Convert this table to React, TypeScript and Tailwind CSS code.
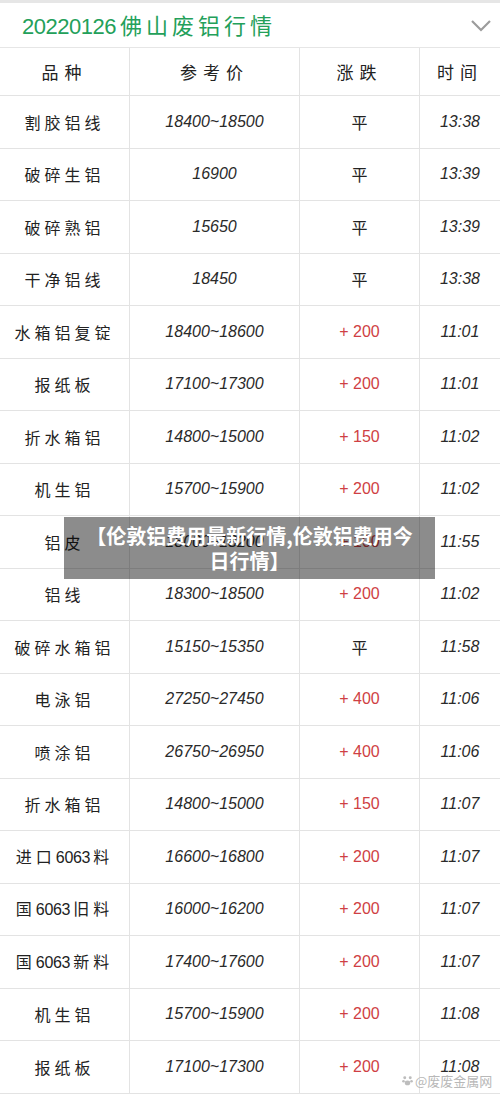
const ROWS: [string, string, string, string][] = [
  ["割胶铝线", "18400~18500", "平", "13:38"],
  ["破碎生铝", "16900", "平", "13:39"],
  ["破碎熟铝", "15650", "平", "13:39"],
  ["干净铝线", "18450", "平", "13:38"],
  ["水箱铝复锭", "18400~18600", "+ 200", "11:01"],
  ["报纸板", "17100~17300", "+ 200", "11:01"],
  ["折水箱铝", "14800~15000", "+ 150", "11:02"],
  ["机生铝", "15700~15900", "+ 200", "11:02"],
  ["铝皮", "18000~18200", "+ 100", "11:55"],
  ["铝线", "18300~18500", "+ 200", "11:02"],
  ["破碎水箱铝", "15150~15350", "平", "11:58"],
  ["电泳铝", "27250~27450", "+ 400", "11:06"],
  ["喷涂铝", "26750~26950", "+ 400", "11:06"],
  ["折水箱铝", "14800~15000", "+ 150", "11:07"],
  ["进口6063料", "16600~16800", "+ 200", "11:07"],
  ["国6063旧料", "16000~16200", "+ 200", "11:07"],
  ["国6063新料", "17400~17600", "+ 200", "11:07"],
  ["机生铝", "15700~15900", "+ 200", "11:08"],
  ["报纸板", "17100~17300", "+ 200", "11:08"],
];

const cjk = "font-['Noto_Sans_CJK_SC',sans-serif]";
const num = "font-['Liberation_Sans',sans-serif] italic";

// digits inside a product name keep tight spacing, CJK gets spread out
function Name({ text }: { text: string }) {
  const parts = text.split(/(\d+)/).filter(Boolean);
  return (
    <span className={`${cjk} text-[16px]`}>
      {parts.map((p, i) =>
        /\d/.test(p) ? (
          <span key={i} className="font-['Liberation_Sans',sans-serif] mr-[3px] tracking-[-0.3px]">
            {p}
          </span>
        ) : (
          <span key={i} className="tracking-[4px]">
            {p}
          </span>
        )
      )}
    </span>
  );
}

export default function App() {
  return (
    <div className="relative w-[500px] h-[1098px] overflow-hidden bg-white text-[#222]">
      {/* title bar */}
      <div className="flex h-[48px] items-center justify-between border-t-[3px] border-b border-[#e6e6e6] pl-[22px] pr-[8px]">
        <div className="flex items-baseline text-[#23a05a]">
          <span className="font-['Liberation_Sans',sans-serif] text-[22px] tracking-[-0.5px]">20220126</span>
          <span className={`${cjk} ml-[4px] text-[22px] tracking-[4px]`}>佛山废铝行情</span>
        </div>
        <svg width="22" height="14" viewBox="0 0 22 14" className="mt-[2px]">
          <polyline points="2,2 11,11 20,2" fill="none" stroke="#9c9c9c" strokeWidth="2.2" />
        </svg>
      </div>

      {/* table */}
      <div className="grid grid-cols-[130px_170px_120px_80px]">
        {["品种", "参考价", "涨跌", "时间"].map((h, i) => (
          <div
            key={h}
            className={`${cjk} flex h-[48px] items-center justify-center border-b border-[#e3e3e3] text-[17px] tracking-[6px] ${i < 3 ? "border-r" : ""}`}
          >
            {h}
          </div>
        ))}
        {ROWS.map((r, ri) =>
          r.map((c, ci) => (
            <div
              key={`${ri}-${ci}`}
              className={`flex h-[52.5px] items-center justify-center border-b border-[#e3e3e3] ${ci < 3 ? "border-r" : ""} ${
                ci === 0
                  ? ""
                  : ci === 2 && c !== "平"
                  ? `${num} text-[16px] not-italic text-[#cf3f44]`
                  : ci === 2
                  ? `${cjk} text-[16px]`
                  : `${num} text-[16px] text-[#2a2a2a]`
              }`}
            >
              {ci === 0 ? <Name text={c} /> : c}
            </div>
          ))
        )}
      </div>

      {/* caption overlay */}
      <div className="absolute left-[64px] top-[517px] w-[371px] bg-black/45 px-[16px] py-[6px] text-center">
        <p className={`${cjk} text-[20px] font-bold leading-[25px] text-white`}>
          【伦敦铝费用最新行情,伦敦铝费用今日行情】
        </p>
      </div>

      {/* watermark */}
      <div className="absolute left-[402px] top-[1071px] flex items-center gap-[2px] text-[#b8b8b8]">
        <svg width="11" height="11" viewBox="0 0 12 12">
          <circle cx="3" cy="3" r="1.6" fill="#bdbdbd" />
          <circle cx="9" cy="3" r="1.6" fill="#bdbdbd" />
          <circle cx="1.6" cy="6.8" r="1.4" fill="#bdbdbd" />
          <circle cx="10.4" cy="6.8" r="1.4" fill="#bdbdbd" />
          <ellipse cx="6" cy="8.6" rx="3" ry="2.6" fill="#bdbdbd" />
        </svg>
        <span className={`${cjk} text-[13px]`}>@废废金属网</span>
      </div>
    </div>
  );
}
